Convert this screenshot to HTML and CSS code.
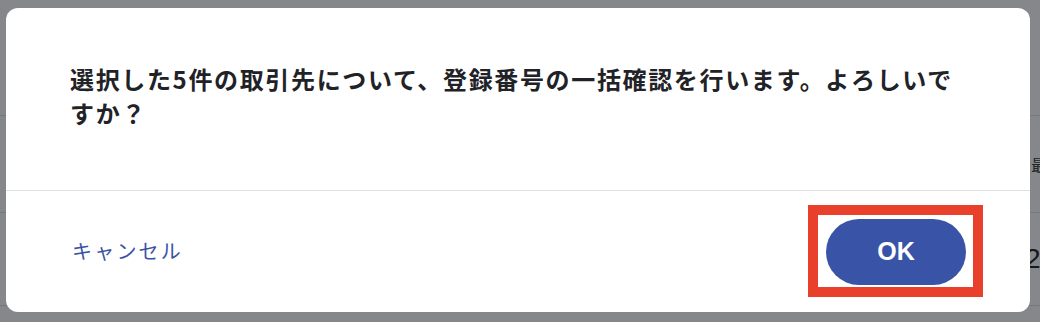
FILE: index.html
```html
<!DOCTYPE html>
<html lang="ja">
<head>
<meta charset="utf-8">
<title>確認</title>
<link rel="stylesheet" href="styles.css">
</head>
<body>
<div class="page">
  <div class="page-head"></div>
  <div class="page-row"><span class="cell-gap"></span><span class="cell cell-label">最終確認日</span></div>
  <div class="page-row row-date"><span class="cell-gap"></span><span class="cell cell-date">2024/05/01</span></div>
  <div class="page-row short"></div>
</div>
<div class="backdrop"></div>
<div class="modal" role="dialog">
  <div class="modal-body">
    <p class="message">選択した5件の取引先について、登録番号の一括確認を行います。よろしいですか？</p>
  </div>
  <div class="modal-footer">
    <button class="btn-cancel" type="button">キャンセル</button>
    <div class="ok-wrap">
      <button class="btn-ok" type="button">OK</button>
      <span class="highlight"></span>
    </div>
  </div>
</div>
</body>
</html>
```
FILE: styles.css
```css
* { box-sizing: border-box; }
html, body {
  margin: 0;
  padding: 0;
  width: 1040px;
  height: 322px;
  overflow: hidden;
}
body {
  position: relative;
  background: #f6f8fb;
  font-family: "Noto Sans CJK JP", "Noto Sans", sans-serif;
  color: #1e2227;
}
.page {
  display: flex;
  flex-direction: column;
  width: 1040px;
  overflow: hidden;
}
.page-head {
  height: 115px;
}
.page-row {
  height: 97px;
  border-top: 1px solid #d8dbe0;
  display: grid;
  grid-template-columns: 1029px 11px;
  align-items: center;
  white-space: nowrap;
}
.page-row.row-date {
  height: 93px;
  grid-template-columns: 1025px 15px;
}
.page-row.short { height: 20px; }
.cell {
  overflow: hidden;
}
.cell-label {
  font-size: 16px;
  color: #3a3d42;
  padding-left: 2px;
}
.cell-date {
  font-family: "Liberation Sans", sans-serif;
  font-size: 28px;
  color: #25282c;
}
.backdrop {
  position: fixed;
  inset: 0;
  background: rgba(6, 8, 12, 0.47);
}
.modal {
  position: absolute;
  left: 6px;
  top: 8px;
  width: 1024px;
  height: 304px;
  background: #ffffff;
  border-radius: 12px;
  display: flex;
  flex-direction: column;
}
.modal-body {
  height: 183px;
  padding: 54px 64px 0 64px;
  border-bottom: 1px solid #dde0e6;
}
.message {
  margin: 0;
  font-size: 24px;
  font-weight: 700;
  line-height: 34px;
  letter-spacing: 1.65px;
  color: #1f2328;
}
.modal-footer {
  flex: 1;
  display: flex;
  align-items: center;
  justify-content: space-between;
  padding: 0 64px 0 64px;
}
.btn-cancel {
  border: 0;
  background: none;
  padding: 0 0 0 2px;
  margin-top: -3px;
  font-family: "Noto Sans CJK JP", sans-serif;
  font-size: 20px;
  letter-spacing: 2.2px;
  color: #3853a6;
  cursor: pointer;
}
.ok-wrap {
  position: relative;
  display: flex;
}
.btn-ok {
  width: 140px;
  height: 66px;
  border: 0;
  border-radius: 33px;
  background: #3954a7;
  color: #ffffff;
  font-family: "Liberation Sans", sans-serif;
  font-size: 25px;
  font-weight: 700;
  cursor: pointer;
}
.highlight {
  position: absolute;
  left: -18px;
  right: -17px;
  top: -14px;
  bottom: -12px;
  border: 10px solid #e8402a;
  pointer-events: none;
}
```
